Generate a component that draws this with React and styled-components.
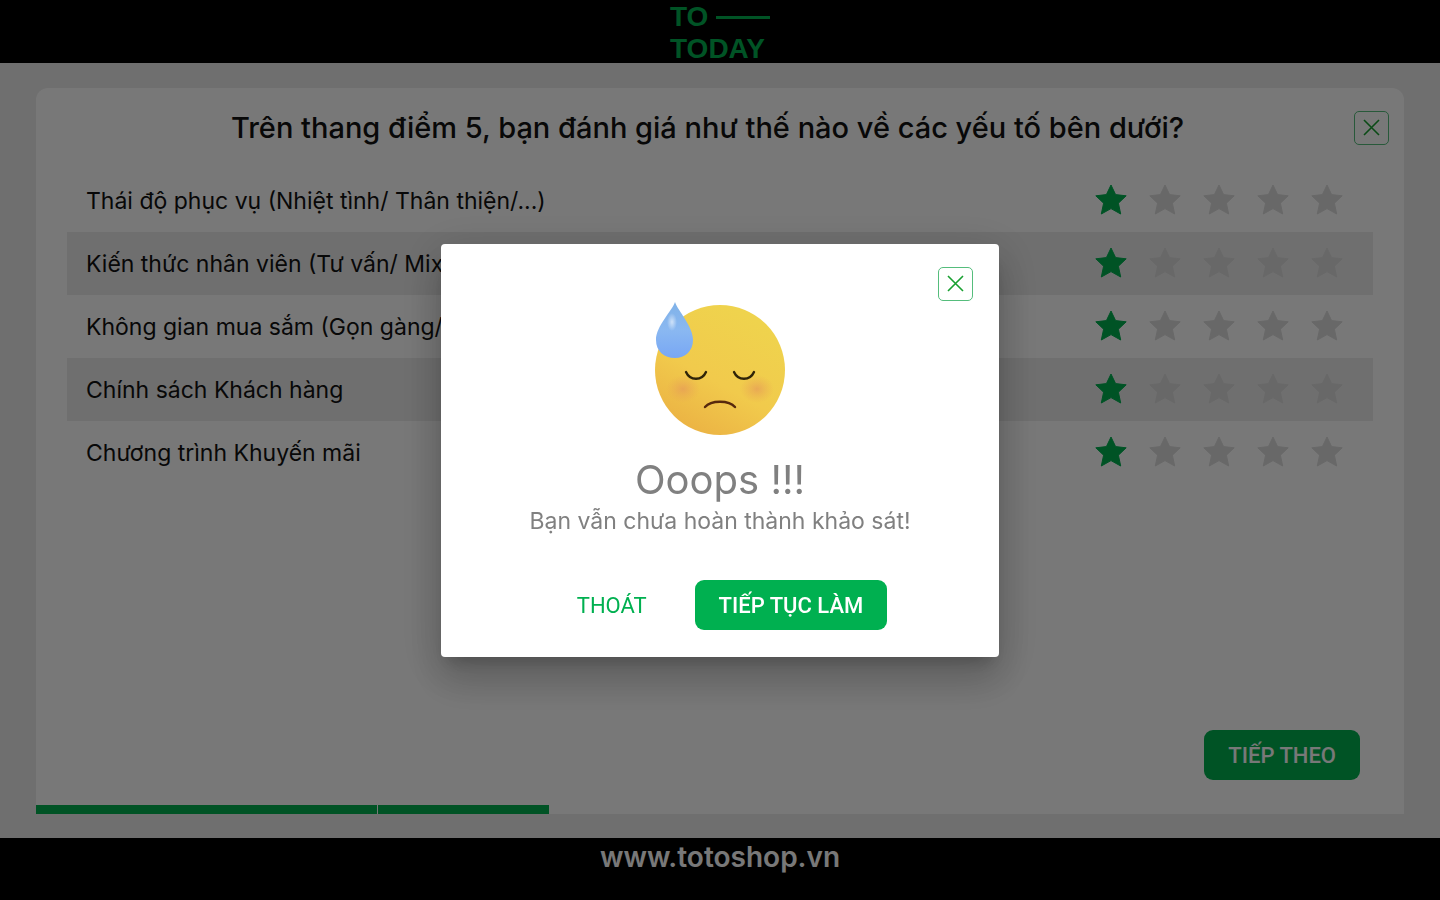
import React, { useState } from 'react';
import styled, { createGlobalStyle } from 'styled-components';

const green = '#00b050';

const GlobalStyle = createGlobalStyle`
  *, *::before, *::after { box-sizing: border-box; }
  body { margin: 0; font-family: Inter, 'Noto Sans', sans-serif; color: #111; }
  button, input { font: inherit; }
`;

const Page = styled.div`
  min-height: 100vh;
  display: flex;
  flex-direction: column;
  background: #ececec;
`;

const Header = styled.header`
  height: 63px;
  display: flex;
  justify-content: center;
  background: #000;
`;

const Logo = styled.a`
  display: flex;
  flex-direction: column;
  width: 100px;
  padding-top: 1px;
  color: ${green};
  font: 700 28px/32px 'Liberation Sans', sans-serif;
  text-decoration: none;
`;

const LogoLine = styled.span`
  display: flex;
  align-items: center;
  justify-content: space-between;
`;

const LogoDash = styled.span`
  width: 54px;
  height: 3px;
  background: ${green};
`;

const Main = styled.main`
  flex: 1;
  display: flex;
  padding: 25px 36px 24px;
`;

const Card = styled.section`
  flex: 1;
  display: flex;
  flex-direction: column;
  background: #fff;
  border-radius: 12px 12px 0 0;
`;

const CardHeader = styled.div`
  display: flex;
  align-items: center;
  padding: 22px 15px 24px 25px;
`;

const Question = styled.h1`
  flex: 1;
  margin: 0;
  text-align: center;
  font-size: 29px;
  line-height: 35px;
  font-weight: 500;
`;

const CloseButton = styled.button`
  width: 35px;
  height: 34px;
  display: grid;
  place-items: center;
  padding: 0;
  color: #18a030;
  background: #fff;
  border: 1px solid #55bd7c;
  border-radius: 5px;
  cursor: pointer;
`;

const Criteria = styled.div`
  flex: 1;
  padding: 0 31px;
`;

const CriterionRow = styled.div`
  display: flex;
  align-items: center;
  justify-content: space-between;
  height: 63px;
  padding: 0 19px;
  font-size: 23px;
  line-height: 30px;
  &:nth-child(even) { background: #ececec; }
`;

const Stars = styled.div`
  display: flex;
`;

const StarLabel = styled.label`
  position: relative;
  width: 54px;
  height: 63px;
  display: grid;
  place-items: center;
  color: ${(p) => (p.$on ? green : '#dedede')};
  cursor: pointer;
`;

const StarInput = styled.input`
  position: absolute;
  inset: 0;
  margin: 0;
  opacity: 0;
  cursor: pointer;
`;

const Actions = styled.div`
  display: flex;
  justify-content: flex-end;
  padding: 0 44px 25px;
`;

const Button = styled.button`
  height: 50px;
  padding: 2px 24px 0;
  color: ${(p) => (p.$plain ? green : '#fff')};
  background: ${(p) => (p.$plain ? 'transparent' : green)};
  border: 0;
  border-radius: 9px;
  font: ${(p) => (p.$plain ? 400 : 500)} 22px/30px Roboto, sans-serif;
  white-space: nowrap;
  cursor: pointer;
`;

const Progress = styled.div`
  display: grid;
  grid-template-columns: repeat(4, 1fr);
  gap: 1px;
  height: 9px;
`;

const ProgressFill = styled.div`
  background: ${green};
`;

const Footer = styled.footer`
  height: 62px;
  padding-top: 2px;
  background: #000;
  text-align: center;
`;

const SiteLink = styled.a`
  color: #fff;
  font-size: 28px;
  line-height: 34px;
  font-weight: 600;
  text-decoration: none;
`;

const Backdrop = styled.div`
  position: fixed;
  inset: 0;
  display: grid;
  place-items: center;
  background: rgba(0, 0, 0, 0.53);
`;

const Modal = styled.dialog`
  position: static;
  display: flex;
  flex-direction: column;
  align-items: center;
  width: 558px;
  max-width: calc(100vw - 32px);
  margin: 0;
  padding: 23px 26px 27px;
  color: #808080;
  background: #fff;
  border: 0;
  border-radius: 4px;
  box-shadow: 0 11px 15px -7px rgba(0, 0, 0, 0.2),
    0 24px 38px 3px rgba(0, 0, 0, 0.14), 0 9px 46px 8px rgba(0, 0, 0, 0.12);
`;

const ModalTop = styled.div`
  align-self: stretch;
  display: flex;
  justify-content: flex-end;
`;

const ModalTitle = styled.h2`
  margin: 19px 0 0;
  font-size: 40px;
  line-height: 52px;
  font-weight: 400;
`;

const ModalText = styled.p`
  margin: 0;
  font-size: 23px;
  line-height: 30px;
`;

const ModalActions = styled.div`
  display: flex;
  gap: 24px;
  margin-top: 44px;
`;

const CloseIcon = () => (
  <svg width="17" height="17" viewBox="0 0 17 17" fill="none" stroke="currentColor" strokeWidth="1.6" aria-hidden="true">
    <path d="M1 1L16 16M16 1L1 16" />
  </svg>
);

const StarIcon = () => (
  <svg width="32" height="33" viewBox="0 0 32 33" fill="currentColor" stroke="currentColor" strokeWidth="1" strokeLinejoin="round" aria-hidden="true">
    <path d="M16 1L20.6 10.6L31.2 11.8L23.4 19.2L25.7 30L16 24.6L6.3 30L8.6 19.2L.8 11.8L11.4 10.6Z" />
  </svg>
);

const SadFace = () => (
  <svg width="130" height="134" viewBox="0 0 130 134" fill="none" role="img" aria-label="Buồn">
    <defs>
      <linearGradient id="face" x1="0.75" y1="0.1" x2="0.25" y2="1">
        <stop offset="0" stopColor="#efd34d" />
        <stop offset="0.55" stopColor="#f1ca4c" />
        <stop offset="1" stopColor="#ebb143" />
      </linearGradient>
      <radialGradient id="cheek">
        <stop offset="0" stopColor="#e69a58" stopOpacity="0.7" />
        <stop offset="1" stopColor="#e9a650" stopOpacity="0" />
      </radialGradient>
      <linearGradient id="drop" x1="0.5" y1="0" x2="0.5" y2="1">
        <stop offset="0" stopColor="#80b2e8" />
        <stop offset="0.5" stopColor="#8ab8f1" />
        <stop offset="1" stopColor="#78a7f5" />
      </linearGradient>
      <radialGradient id="shine">
        <stop offset="0" stopColor="#fff" stopOpacity="0.6" />
        <stop offset="1" stopColor="#fff" stopOpacity="0" />
      </radialGradient>
    </defs>
    <circle cx="65" cy="69" r="65" fill="url(#face)" />
    <ellipse cx="28" cy="88" rx="17" ry="14" fill="url(#cheek)" />
    <ellipse cx="102" cy="88" rx="17" ry="14" fill="url(#cheek)" />
    <path d="M20 1C23 10 38 25 38 39C38 50 30 57 20 57C9 57 1 50 1 39C1 25 17 10 20 1Z" fill="url(#drop)" />
    <ellipse cx="17" cy="21" rx="5" ry="9" fill="url(#shine)" />
    <g stroke="#2f2408" strokeWidth="2.4" strokeLinecap="round">
      <path d="M31 71C35 80 47 80 51 71" />
      <path d="M79 71C83 80 95 80 99 71" />
      <path d="M50 106C56 99 74 99 80 106" stroke="#57290d" />
    </g>
  </svg>
);

const criteria = [
  'Thái độ phục vụ (Nhiệt tình/ Thân thiện/...)',
  'Kiến thức nhân viên (Tư vấn/ Mix',
  'Không gian mua sắm (Gọn gàng/',
  'Chính sách Khách hàng',
  'Chương trình Khuyến mãi',
];

const steps = [100, 50];

function Rating({ name, label }) {
  const [value, setValue] = useState(1);
  return (
    <Stars role="radiogroup" aria-label={label}>
      {[1, 2, 3, 4, 5].map((n) => (
        <StarLabel key={n} $on={n <= value}>
          <StarInput
            type="radio"
            name={name}
            value={n}
            checked={n === value}
            onChange={() => setValue(n)}
            aria-label={`${n} sao`}
          />
          <StarIcon />
        </StarLabel>
      ))}
    </Stars>
  );
}

export default function App() {
  const [open, setOpen] = useState(true);
  const close = () => setOpen(false);
  return (
    <>
      <GlobalStyle />
      <Page>
        <Header>
          <Logo href="#">
            <LogoLine>TO<LogoDash /></LogoLine>
            <LogoLine>TODAY</LogoLine>
          </Logo>
        </Header>
        <Main>
          <Card>
            <CardHeader>
              <Question>Trên thang điểm 5, bạn đánh giá như thế nào về các yếu tố bên dưới?</Question>
              <CloseButton aria-label="Đóng" onClick={() => setOpen(true)}><CloseIcon /></CloseButton>
            </CardHeader>
            <Criteria>
              {criteria.map((text, i) => (
                <CriterionRow key={text}>
                  <span>{text}</span>
                  <Rating name={`criterion-${i}`} label={text} />
                </CriterionRow>
              ))}
            </Criteria>
            <Actions><Button>TIẾP THEO</Button></Actions>
            <Progress>
              {steps.map((done, i) => (
                <ProgressFill key={i} style={{ width: `${done}%` }} />
              ))}
            </Progress>
          </Card>
        </Main>
        <Footer><SiteLink href="#">www.totoshop.vn</SiteLink></Footer>
      </Page>
      {open && (
        <Backdrop>
          <Modal open aria-labelledby="modal-title">
            <ModalTop>
              <CloseButton aria-label="Đóng" onClick={close}><CloseIcon /></CloseButton>
            </ModalTop>
            <SadFace />
            <ModalTitle id="modal-title">Ooops !!!</ModalTitle>
            <ModalText>Bạn vẫn chưa hoàn thành khảo sát!</ModalText>
            <ModalActions>
              <Button $plain onClick={close}>THOÁT</Button>
              <Button onClick={close}>TIẾP TỤC LÀM</Button>
            </ModalActions>
          </Modal>
        </Backdrop>
      )}
    </>
  );
}
